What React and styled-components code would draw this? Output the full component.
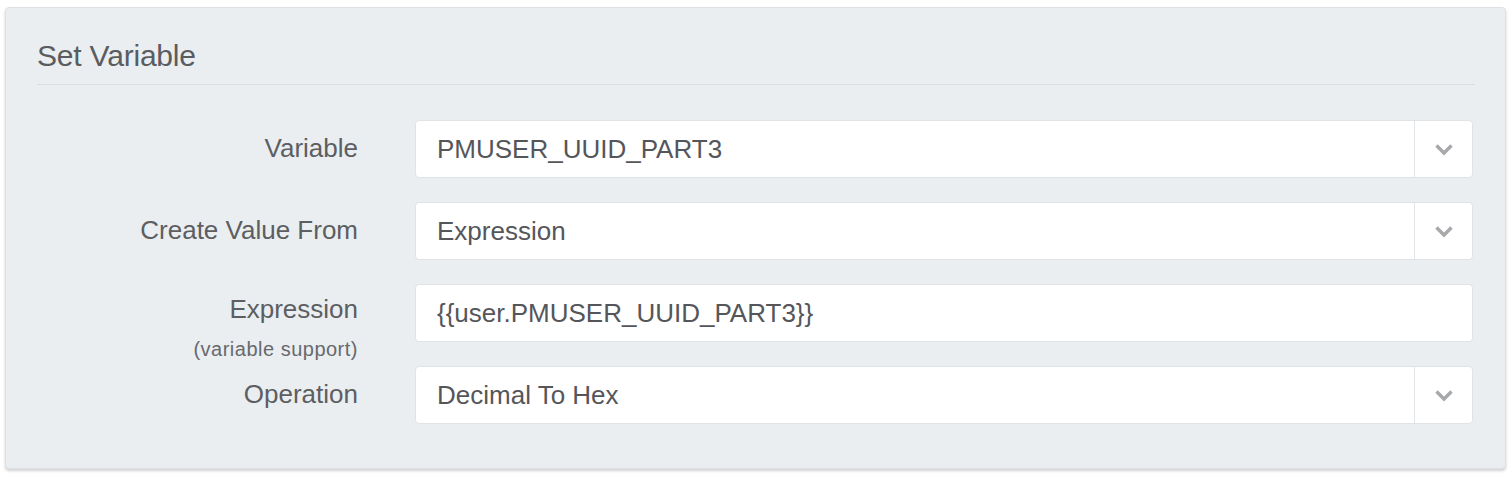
import React from 'react';
import styled, { createGlobalStyle } from 'styled-components';

const Global = createGlobalStyle`
  body {
    margin: 0;
    background: #ffffff;
    font-family: "Liberation Sans", Arial, sans-serif;
  }
`;

const Page = styled.div`
  padding: 7px 6px 8px 5px;
`;

const Panel = styled.div`
  background: #eaeef1;
  border: 1px solid #dde0e4;
  border-radius: 4px;
  box-shadow: 0 2px 3px rgba(0, 0, 0, 0.18);
  padding: 0 32px 0 31px;
  height: 462px;
  box-sizing: border-box;
`;

const Header = styled.div`
  height: 77px;
  display: flex;
  align-items: center;
  border-bottom: 1px solid #dadee2;
  font-size: 30px;
  letter-spacing: -0.2px;
  color: #5a5c5f;
  padding-top: 20px;
  margin-right: -2px;
  box-sizing: border-box;
`;

const Form = styled.div`
  display: flex;
  flex-direction: column;
  gap: 24px;
  padding-top: 35px;
`;

const Row = styled.div`
  display: grid;
  grid-template-columns: 321px 1fr;
  grid-template-rows: 58px;
  column-gap: 57px;
  align-items: ${p => (p.$top ? 'start' : 'center')};
`;

const Label = styled.div`
  text-align: right;
  font-size: 26px;
  color: #5c5e61;
  line-height: 1.2;
  padding-top: ${p => (p.$top ? '10px' : '0')};
`;

const Hint = styled.div`
  font-size: 20px;
  letter-spacing: 0.5px;
  color: #67696d;
  margin-top: 12px;
`;

const Field = styled.div`
  height: 58px;
  background: #ffffff;
  border: 1px solid #e0e3e6;
  border-radius: 4px;
  display: flex;
  align-items: center;
  box-sizing: border-box;
  font-size: 26px;
  color: #55565a;
`;

const Value = styled.div`
  flex: 1;
  padding-left: 21px;
`;

const Caret = styled.div`
  width: 57px;
  height: 100%;
  border-left: 1px solid #e2e5e8;
  display: flex;
  align-items: center;
  justify-content: center;
`;

const Chevron = () => (
  <svg width="20" height="13" viewBox="0 0 20 13">
    <path d="M2.5 2.5 L10 10 L17.5 2.5" fill="none" stroke="#a6a8ab" strokeWidth="3.4" />
  </svg>
);

const rows = [
  { label: 'Variable', value: 'PMUSER_UUID_PART3', select: true },
  { label: 'Create Value From', value: 'Expression', select: true },
  { label: 'Expression', hint: '(variable support)', value: '{{user.PMUSER_UUID_PART3}}' },
  { label: 'Operation', value: 'Decimal To Hex', select: true },
];

export default function App() {
  return (
    <>
      <Global />
      <Page>
        <Panel>
          <Header>Set Variable</Header>
          <Form>
            {rows.map(r => (
              <Row key={r.label} $top={!!r.hint}>
                <Label $top={!!r.hint}>
                  {r.label}
                  {r.hint && <Hint>{r.hint}</Hint>}
                </Label>
                <Field>
                  <Value>{r.value}</Value>
                  {r.select && (
                    <Caret>
                      <Chevron />
                    </Caret>
                  )}
                </Field>
              </Row>
            ))}
          </Form>
        </Panel>
      </Page>
    </>
  );
}
